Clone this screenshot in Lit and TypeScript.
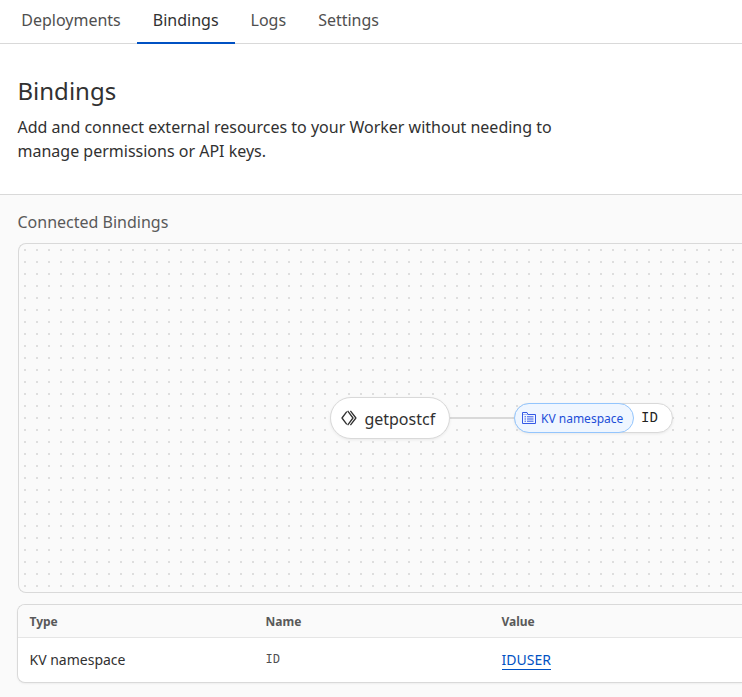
import { LitElement, html, css } from "lit";
import { customElement } from "lit/decorators.js";
import { classMap } from "lit/directives/class-map.js";

const TABS = ["Deployments", "Bindings", "Logs", "Settings"];
const ROWS = [{ type: "KV namespace", name: "ID", value: "IDUSER" }];

@customElement("binding-map")
class BindingMap extends LitElement {
  static styles = css`
    :host {
      display: block;
      position: relative;
      box-sizing: border-box;
      height: 350px;
      border: 1px solid #d9d9d9;
      border-right: 0;
      border-radius: 8px 0 0 8px;
      background: conic-gradient(from 90deg at 10px 10px, #dedede 25%, transparent 0) -5px -5px / 12px 12px #fafafa;
      overflow: hidden;
    }
    .worker, .binding {
      position: absolute;
      box-sizing: border-box;
      display: flex;
      align-items: center;
      background: #fff;
      border: 1px solid #d9d9d9;
      box-shadow: 0 1px 3px rgba(0, 0, 0, 0.07);
    }
    .worker {
      left: 311px;
      top: 153px;
      width: 120px;
      height: 42px;
      border-radius: 21px;
      padding: 1px 0 0 10px;
      gap: 7.4px;
      font-size: 16px;
      color: #313131;
    }
    .worker svg { margin-top: -2px; }
    .link {
      position: absolute;
      left: 431px;
      top: 173px;
      width: 65px;
      height: 2px;
      background: #d9d9d9;
    }
    .binding {
      left: 495px;
      top: 159px;
      width: 159px;
      height: 30px;
      border-radius: 15px;
    }
    .kind {
      box-sizing: border-box;
      display: flex;
      align-items: center;
      flex: none;
      width: 120px;
      height: 30px;
      margin: -1px 0 -1px -1px;
      padding-left: 7px;
      gap: 5px;
      border: 1px solid #93c5fd;
      border-radius: 15px;
      background: #eff6ff;
      color: #1d4ed8;
      font-size: 12px;
      white-space: nowrap;
    }
    .kind span { margin-top: 2px; }
    .id {
      margin-left: 7px;
      font: 14px/20px "Liberation Mono", monospace;
      color: #222;
    }
    svg { display: block; flex: none; }
  `;

  render() {
    return html`
      <div class="link"></div>
      <div class="worker">
        <svg width="16" height="16" viewBox="0 0 16 16" fill="none" stroke="#313131" stroke-width="1.3" stroke-linejoin="round">
          <path d="M5.8 1.6 L1 8 L5.8 14.4" />
          <path d="M6.6 .9 L12 8 L6.6 15.1" />
          <path d="M9.4 .9 L14.9 8 L9.4 15.1" />
        </svg>
        <span>getpostcf</span>
      </div>
      <div class="binding">
        <div class="kind">
          <svg width="14" height="14" viewBox="0 0 14 14" fill="none" stroke="#3459e6" stroke-width="1">
            <path d="M.5 12.5 V1.5 H5 L6 3.5 H13.5 V12.5 Z" />
            <path d="M.5 3.5 H6" stroke-opacity=".4" />
            <path d="M2.5 5.8 H4 M5 5.8 H11.5 M2.5 8 H4 M5 8 H11.5 M2.5 10.2 H4 M5 10.2 H11.5" />
          </svg>
          <span>KV namespace</span>
        </div>
        <span class="id">ID</span>
      </div>
    `;
  }
}

@customElement("app-root")
class AppRoot extends LitElement {
  static styles = css`
    :host {
      display: flex;
      flex-direction: column;
      box-sizing: border-box;
      height: 697px;
      overflow: hidden;
      background: #fff;
      color: #313131;
      font-family: "Noto Sans", sans-serif;
      font-size: 16px;
      line-height: 24px;
    }
    .tabs {
      display: flex;
      box-sizing: border-box;
      height: 44px;
      padding-left: 5.25px;
      border-bottom: 1px solid #d9d9d9;
      flex: none;
    }
    .tab {
      box-sizing: border-box;
      height: 44px;
      padding: 8px 16px 0;
      color: #4f4f4f;
    }
    .active {
      color: #313131;
      border-bottom: 2px solid #0051c3;
    }
    .intro {
      box-sizing: border-box;
      height: 151px;
      flex: none;
      padding: 31px 0 0 17.5px;
      border-bottom: 1px solid #d9d9d9;
    }
    h1 {
      margin: 0 0 9px;
      font-size: 24px;
      line-height: 31px;
      font-weight: 400;
    }
    p { margin: 0; width: 560px; }
    .content {
      flex: 1;
      padding: 15px 0 0 17.5px;
      background: #fafafa;
    }
    h2 {
      margin: 0 0 9px;
      font-size: 16px;
      line-height: 24px;
      font-weight: 400;
      color: #595959;
    }
    binding-map { margin-left: 0.5px; }
    .table {
      box-sizing: border-box;
      height: 79px;
      margin: 11px 0 0 -0.5px;
      border: 1px solid #d9d9d9;
      border-right: 0;
      border-radius: 8px 0 0 8px;
      background: #fff;
      overflow: hidden;
      box-shadow: 0 1px 2px rgba(0, 0, 0, 0.05);
    }
    .row {
      display: grid;
      grid-template-columns: 236px 236px 1fr;
      align-items: center;
      padding-left: 11.5px;
      height: 44px;
      font-size: 14px;
      line-height: 20px;
    }
    .head {
      box-sizing: border-box;
      height: 33px;
      padding-top: 2px;
      border-bottom: 1px solid #e5e5e5;
      background: #fafafa;
      color: #595959;
      font-size: 12px;
      font-weight: 700;
    }
    .code {
      font-family: "Liberation Mono", monospace;
      font-size: 12px;
      color: #4f4f4f;
    }
    .value {
      justify-self: start;
      line-height: 18px;
      color: #0051c3;
      border-bottom: 1px solid #0051c3;
    }
  `;

  render() {
    return html`
      <nav class="tabs">
        ${TABS.map((t) => html`<div class=${classMap({ tab: true, active: t === "Bindings" })}>${t}</div>`)}
      </nav>
      <header class="intro">
        <h1>Bindings</h1>
        <p>Add and connect external resources to your Worker without needing to manage permissions or API keys.</p>
      </header>
      <main class="content">
        <h2>Connected Bindings</h2>
        <binding-map></binding-map>
        <div class="table">
          <div class="row head"><span>Type</span><span>Name</span><span>Value</span></div>
          ${ROWS.map((r) => html`
            <div class="row">
              <span>${r.type}</span><span class="code">${r.name}</span><a class="value">${r.value}</a>
            </div>`)}
        </div>
      </main>
    `;
  }
}
